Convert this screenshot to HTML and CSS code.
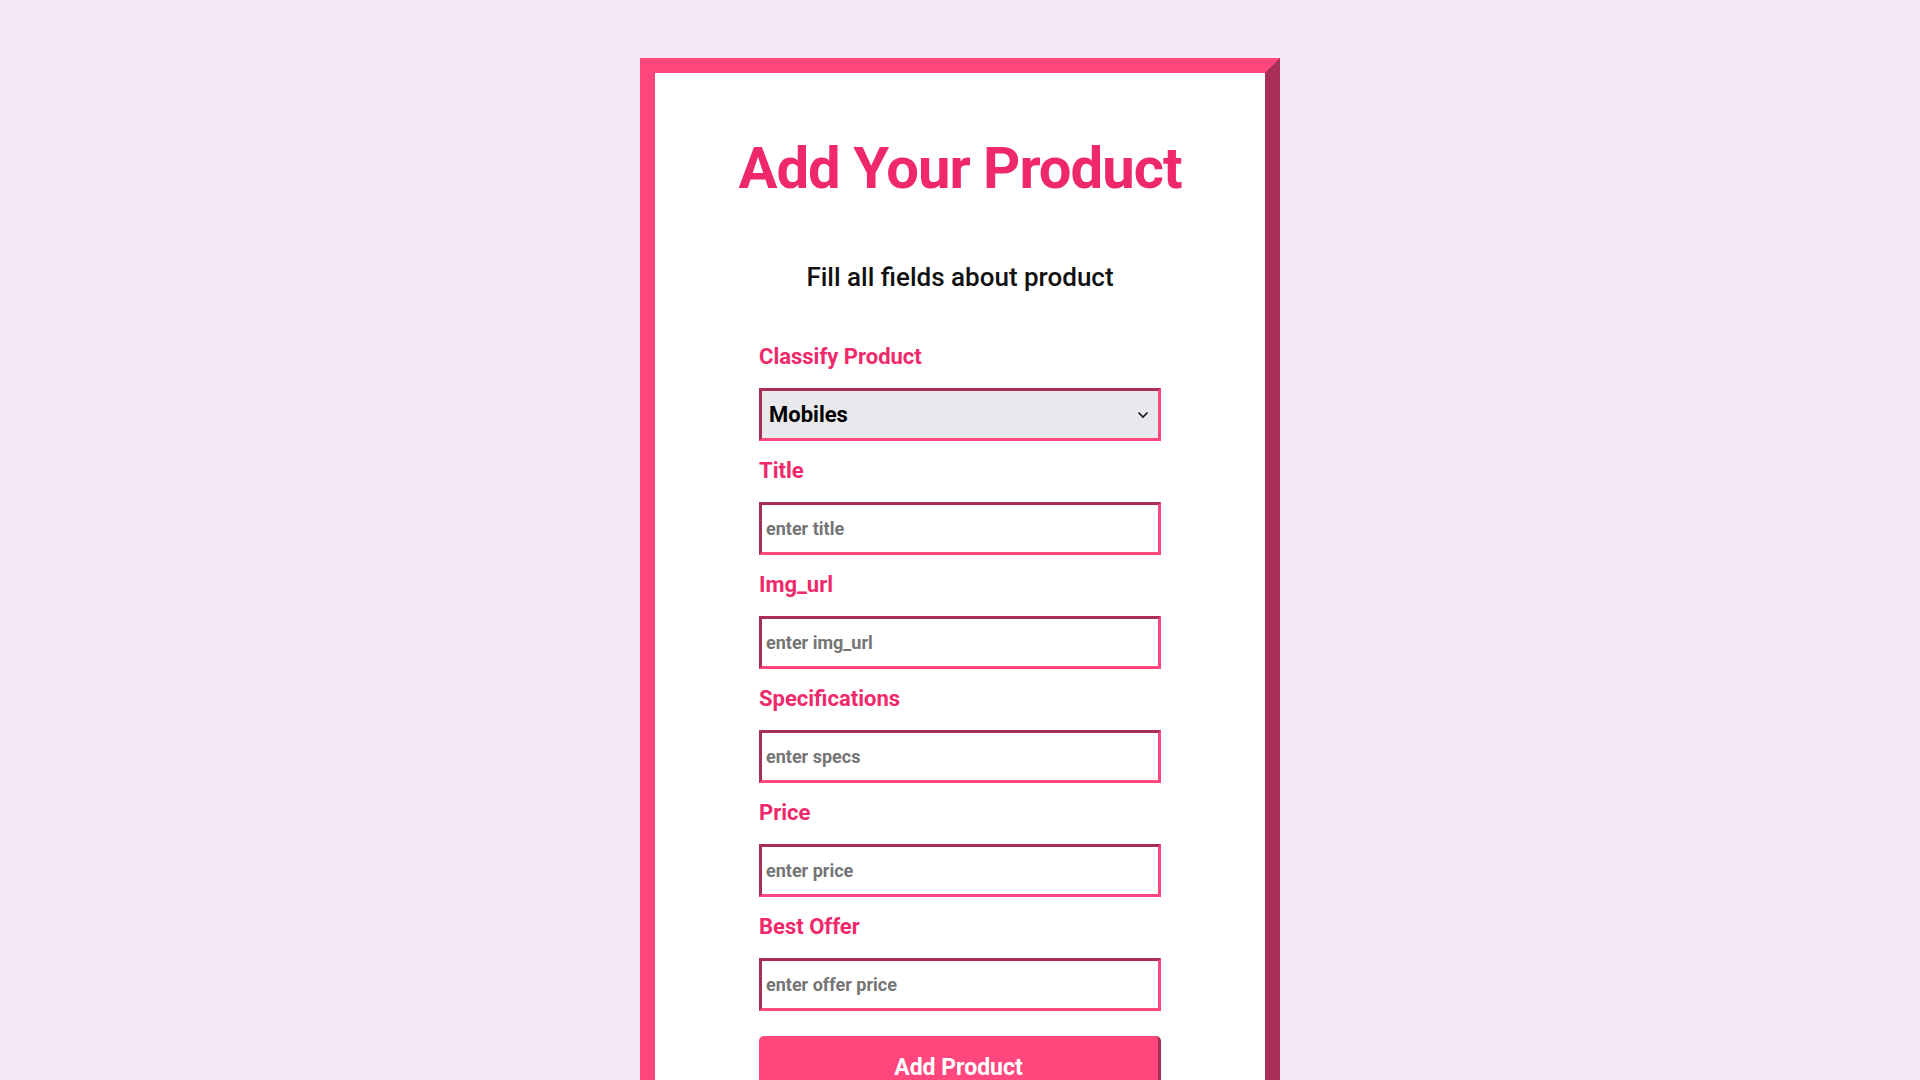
FILE: index.html
```html
<!DOCTYPE html>
<html lang="en">
<head>
<meta charset="utf-8">
<title>Add Your Product</title>
<link rel="stylesheet" href="styles.css">
</head>
<body>
<main class="card">
  <h1 class="title">Add Your Product</h1>
  <p class="subtitle">Fill all fields about product</p>
  <form class="form">
    <div class="field">
      <label class="label" for="cat">Classify Product</label>
      <div class="select-wrap">
        <select class="select" id="cat">
          <option>Mobiles</option>
          <option>Laptops</option>
        </select>
        <svg class="chevron" width="12" height="8" viewBox="0 0 12 8"><path d="M1.5 1.5 L6 6 L10.5 1.5" fill="none" stroke="#111" stroke-width="1.6"/></svg>
      </div>
    </div>
    <div class="field">
      <label class="label" for="title">Title</label>
      <input class="input" id="title" placeholder="enter title">
    </div>
    <div class="field">
      <label class="label" for="img">Img_url</label>
      <input class="input" id="img" placeholder="enter img_url">
    </div>
    <div class="field">
      <label class="label" for="specs">Specifications</label>
      <input class="input" id="specs" placeholder="enter specs">
    </div>
    <div class="field">
      <label class="label" for="price">Price</label>
      <input class="input" id="price" placeholder="enter price">
    </div>
    <div class="field">
      <label class="label" for="offer">Best Offer</label>
      <input class="input" id="offer" placeholder="enter offer price">
    </div>
    <button class="button" type="button">Add Product</button>
  </form>
</main>
</body>
</html>
```
FILE: styles.css
```css
* { box-sizing: border-box; }
html, body { margin: 0; padding: 0; }
body {
  background: #f5e7f5;
  font-family: Roboto, "Open Sans", sans-serif;
  min-height: 1200px;
}
.card {
  width: 640px;
  margin: 58px auto 0;
  background: #fff;
  border: 15px solid;
  border-color: #ff477e #a82f56 #a82f56 #ff477e;
  padding: 60px 0 60px;
  display: flex;
  flex-direction: column;
  align-items: center;
}
.title {
  margin: 0;
  color: #ef286a;
  font-size: 58px;
  font-weight: 700;
  line-height: 70px;
  letter-spacing: -1px;
}
.subtitle {
  margin: 59px 0 0;
  font-size: 26px;
  font-weight: 500;
  line-height: 30px;
  color: #111;
}
.form {
  width: 402px;
  margin-top: 53px;
  display: flex;
  flex-direction: column;
}
.field {
  display: flex;
  flex-direction: column;
  padding-bottom: 18px;
}
.label {
  color: #f0296b;
  font-size: 22px;
  font-weight: 700;
  line-height: 24px;
  margin-bottom: 19px;
}
.select-wrap { position: relative; }
.select {
  appearance: none;
  -webkit-appearance: none;
  width: 100%;
  height: 53px;
  margin: 0;
  border: 3px solid;
  border-color: #a82f56 #ff477e #ff477e #a82f56;
  background: #e9e8ed;
  font-family: inherit;
  font-size: 22px;
  font-weight: 700;
  color: #000;
  padding: 0 7px;
  border-radius: 0;
  outline: none;
}
.chevron {
  position: absolute;
  right: 12px;
  top: 23px;
  pointer-events: none;
}
.input {
  width: 100%;
  height: 53px;
  margin: 0;
  border: 3px solid;
  border-color: #a82f56 #ff477e #ff477e #a82f56;
  background: #fff;
  font-family: inherit;
  font-size: 18px;
  font-weight: 700;
  padding: 0 4px;
  outline: none;
}
.input::placeholder { color: #757575; }
.button {
  margin-top: 7px;
  height: 64px;
  width: 100%;
  border: none;
  border-right: 3px solid #a82f56;
  border-radius: 5px 5px 0 0;
  background: #ff477e;
  color: #fff;
  font-family: inherit;
  font-size: 23px;
  font-weight: 700;
  padding: 0;
  display: flex;
  justify-content: center;
  align-items: flex-start;
  padding-top: 17px;
  line-height: 30px;
}
```
